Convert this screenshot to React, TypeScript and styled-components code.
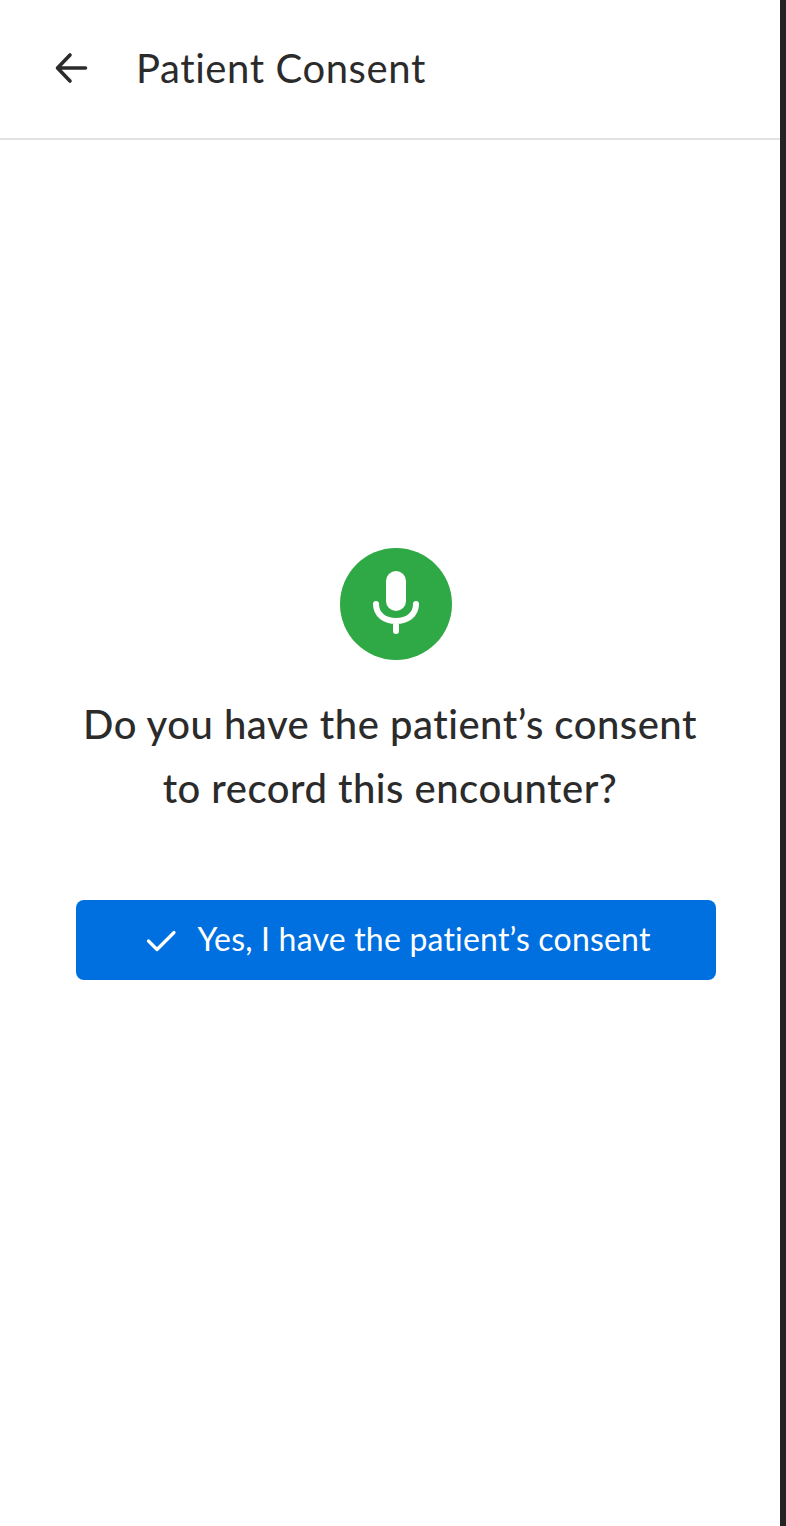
import React from 'react';
import styled, { createGlobalStyle } from 'styled-components';

const GlobalStyle = createGlobalStyle`
    html, body {
        margin: 0;
        padding: 0;
        background: #ffffff;
    }
    * {
        box-sizing: border-box;
    }
`

const Screen = styled.div`
    display: flex;
    width: 786px;
    height: 1526px;
    overflow: hidden;
    font-family: "Lato", "Liberation Sans", sans-serif;
    font-variant-ligatures: none;
    color: #2b2b2b;
`
const Page = styled.div`
    flex: 1;
    background: #ffffff;
`
const EdgeBar = styled.div`
    width: 6px;
    background: #232323;
`
const Header = styled.header`
    display: flex;
    align-items: center;
    height: 140px;
    padding-left: 52px;
    border-bottom: 2px solid #e2e2e2;
`
const BackButton = styled.div`
    display: flex;
    width: 40px;
    height: 40px;
    margin-right: 44px;
`
const Title = styled.h1`
    margin: 0;
    padding-bottom: 2px;
    font-size: 40px;
    font-weight: 400;
    line-height: 56px;
    letter-spacing: 0.6px;
`
const Content = styled.main`
    display: flex;
    flex-direction: column;
    align-items: center;
    padding: 408px 64px 0 76px;
`
const MicCircle = styled.div`
    display: flex;
    align-items: center;
    justify-content: center;
    width: 112px;
    height: 112px;
    padding-bottom: 3px;
    border-radius: 50%;
    background: #2fa846;
`
const Question = styled.p`
    margin: 32px 0 80px;
    padding-right: 12px;
    font-size: 40px;
    font-weight: 500;
    line-height: 64px;
    letter-spacing: 0.5px;
    text-align: center;
`
const ConsentButton = styled.button`
    display: flex;
    align-items: center;
    justify-content: center;
    gap: 20px;
    width: 640px;
    height: 80px;
    padding: 0 0 0 4px;
    border: 0;
    border-radius: 8px;
    background: #006fdf;
    color: #ffffff;
    font-family: inherit;
    font-size: 32px;
    font-weight: 400;
    letter-spacing: 0.2px;
`
const ButtonLabel = styled.span`
    padding-bottom: 4px;
`

const App: React.FC = () => {
    return (
        <Screen>
            <GlobalStyle />
            <Page>
                <Header>
                    <BackButton>
                        <svg width="40" height="40" viewBox="0 0 40 40" fill="none" stroke="#2b2b2b" strokeWidth="3.6" strokeLinecap="round" strokeLinejoin="round">
                            <path d="M33.5 19H6M18 6 5.5 19 18 32" />
                        </svg>
                    </BackButton>
                    <Title>Patient Consent</Title>
                </Header>
                <Content>
                    <MicCircle>
                        <svg width="48" height="63" viewBox="0 0 48 63" fill="#ffffff">
                            <rect x="14" y="0" width="20" height="40" rx="10" />
                            <path d="M4 33C4 44 13 50 24 50S44 44 44 33M24 50v10" fill="none" stroke="#ffffff" strokeWidth="6" strokeLinecap="round" />
                        </svg>
                    </MicCircle>
                    <Question>
                        Do you have the patient’s consent
                        <br />
                        to record this encounter?
                    </Question>
                    <ConsentButton>
                        <svg width="32" height="24" viewBox="0 0 32 24" fill="none" stroke="#ffffff" strokeWidth="3.2" strokeLinecap="round" strokeLinejoin="round">
                            <path d="M3.5 13 12 21.5 29 4.5" />
                        </svg>
                        <ButtonLabel>Yes, I have the patient’s consent</ButtonLabel>
                    </ConsentButton>
                </Content>
            </Page>
            <EdgeBar />
        </Screen>
    );
}
export default App;
